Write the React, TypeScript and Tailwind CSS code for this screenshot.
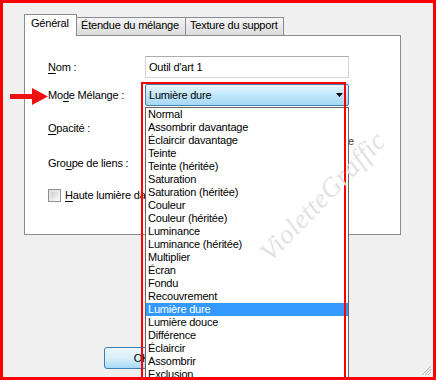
import React from "react";

const items = [
  "Normal",
  "Assombrir davantage",
  "Éclaircir davantage",
  "Teinte",
  "Teinte (héritée)",
  "Saturation",
  "Saturation (héritée)",
  "Couleur",
  "Couleur (héritée)",
  "Luminance",
  "Luminance (héritée)",
  "Multiplier",
  "Écran",
  "Fondu",
  "Recouvrement",
  "Lumière dure",
  "Lumière douce",
  "Différence",
  "Éclaircir",
  "Assombrir",
  "Exclusion",
  "Négatif",
];

const selected = "Lumière dure";

function Label({ pre, key1, post }: { pre: string; key1: string; post: string }) {
  return (
    <span>
      {pre}
      <span className="underline underline-offset-2">{key1}</span>
      {post}
    </span>
  );
}

function Tabs() {
  return (
    <div className="ml-[21px] mt-[10px] flex h-[22px] items-end">
      <div className="relative z-10 -mb-px flex h-[22px] w-[53px] items-start border border-b-0 border-[#898c95] bg-white pl-[6px] pt-[3px]">
        Général
      </div>
      <div className="flex h-[18px] w-[109px] items-start border-t border-r border-[#898c95] bg-gradient-to-b from-[#f5f5f5] to-[#dcdcdc] pl-[4px] pt-[2px]">
        Étendue du mélange
      </div>
      <div className="flex h-[18px] w-[98px] items-start border-t border-r border-[#898c95] bg-gradient-to-b from-[#f5f5f5] to-[#dcdcdc] pl-[4px] pt-[2px]">
        Texture du support
      </div>
    </div>
  );
}

function Panel() {
  return (
    <div className="ml-[21px] flex h-[200px] w-[377px] flex-col border border-[#898c95] bg-white pl-[23px]">
      <div className="mt-[20px] flex h-[22px] items-center">
        <div className="w-[97px]">
          <Label pre="" key1="N" post="om :" />
        </div>
        <div className="flex h-[22px] w-[204px] items-center border border-[#d5d5d5] border-t-[#abadb3] pl-[3px]">
          Outil d'art 1
        </div>
      </div>
      <div className="mt-[6px] flex h-[22px] items-center">
        <div className="w-[97px]">
          <Label pre="Mo" key1="d" post="e Mélange :" />
        </div>
        <div className="flex h-[22px] w-[204px] items-center justify-between rounded-[2px] border border-[#3c7fb1] bg-gradient-to-b from-[#eaf6fd] via-[#bee6fd] to-[#a7d9f5] pl-[3px] pr-[5px]">
          <span>Lumière dure</span>
          <svg width="7" height="4" viewBox="0 0 7 4">
            <path d="M0 0h7L3.5 4z" fill="#000" />
          </svg>
        </div>
      </div>
      <div className="mt-[11px] flex h-[22px] items-start">
        <div className="flex h-[22px] w-[97px] items-center">
          <Label pre="" key1="O" post="pacité :" />
        </div>
        <div className="flex h-[30px] w-[209px] items-end justify-end text-[#444]">
          Valeur de base
        </div>
      </div>
      <div className="mt-[13px] flex h-[22px] items-center">
        <div className="w-[97px]">
          <Label pre="Gro" key1="u" post="pe de liens :" />
        </div>
      </div>
      <div className="mt-[10px] flex h-[22px] items-center">
        <div className="mr-[4px] h-[13px] w-[13px] border border-[#8f8f8f] bg-gradient-to-br from-[#dcdcdc] to-[#fafafa] p-[2px]">
          <div className="h-full w-full bg-gradient-to-br from-[#cbcfd5] to-[#f4f4f4]" />
        </div>
        <Label pre="" key1="H" post="aute lumière dans les ombres" />
      </div>
    </div>
  );
}

export default function App() {
  return (
    <div className="relative h-[380px] w-[436px] overflow-hidden border-[3px] border-[#ff0000] bg-[#f0f0f0] font-['Liberation_Sans',Arial,sans-serif] text-[11px] leading-none tracking-[-0.2px] text-black">
      <Tabs />
      <Panel />

      <div className="ml-[101px] mt-[112px] flex h-[22px] w-[75px] items-center justify-center rounded-[3px] border border-[#3c7fb1] bg-gradient-to-b from-[#eaf6fd] via-[#d9f0fc] to-[#a7d9f5]">
        OK
      </div>

      {/* open dropdown list */}
      <div className="absolute left-[142px] top-[104px] w-[204px] border border-[#646464] bg-white">
        {items.map((item) => (
          <div
            key={item}
            className={
              item === selected
                ? "flex h-[13px] items-center bg-[#3399ff] pl-[2px] text-white"
                : "flex h-[13px] items-center pl-[2px]"
            }
          >
            {item}
          </div>
        ))}
      </div>

      {/* red annotation box */}
      <div className="absolute left-[138px] top-[79px] h-[320px] w-[205px] border-2 border-[#ff0000]" />

      {/* red arrow */}
      <svg className="absolute left-[7px] top-[85px]" width="38" height="17" viewBox="0 0 38 17">
        <path d="M0 6h22V0l16 8.5L22 17v-6H0z" fill="#ee1111" />
      </svg>

      {/* watermark */}
      <div className="absolute left-[236px] top-[180px] origin-center -rotate-[46deg] font-['Liberation_Serif',serif] text-[27px] italic tracking-[0.5px] text-[#e2e2e2]">
        VioletteGraffic
      </div>

      {/* resize grip */}
      <svg className="absolute bottom-[1px] right-[1px]" width="12" height="12" viewBox="0 0 12 12">
        <path d="M11 2L2 11M11 5L5 11M11 8L8 11" stroke="#b8b8b8" strokeWidth="1" />
      </svg>
    </div>
  );
}
